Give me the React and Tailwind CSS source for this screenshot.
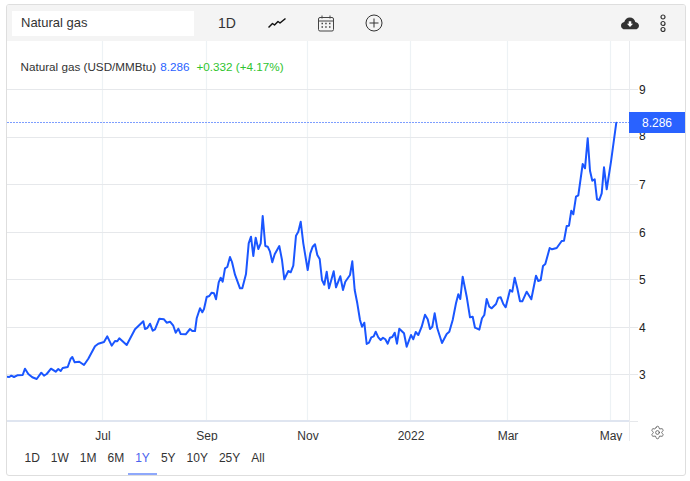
import React from "react";
import { Settings } from "lucide-react";

const seg = (ox, oy, s, pts) => pts.map(([x, y]) => [ox + x / s, oy + y / s]);
const line = [
  ...seg(0, 260, 3, [[20,350],[28,351],[34,347],[42,351],[52,346],[68,345],[75,326],[85,342],[97,352],[110,357],[124,338],[132,347],[140,342],[153,326],[167,335],[175,327],[182,333],[188,324],[203,321],[212,296],[217,291],[224,307],[238,305],[252,315],[265,296],[285,259],[295,251],[312,246],[322,229],[335,257],[345,243],[352,244],[358,235],[380,255],[405,208],[430,184],[435,207],[442,204],[450,191],[458,212],[465,208],[478,176],[492,178],[500,188],[510,185],[520,197],[527,218],[535,206],[542,222],[557,223],[570,207],[577,213],[585,213],[590,175]]),
  ...seg(200, 200, 3, [[0,325],[7,337],[12,327],[20,291],[28,288],[35,278],[42,280],[48,298],[56,247],[62,233],[68,245],[75,205],[82,201],[90,171],[96,186],[105,224],[120,265],[127,265],[138,222],[146,130],[153,110],[160,168],[167,113],[175,147],[182,130],[188,48],[196,138],[203,140],[210,155],[217,187],[224,163],[238,138],[246,180],[253,238],[265,213],[272,217],[280,197],[288,107],[295,95],[302,65],[310,130],[323,210],[331,160],[338,140],[345,133],[352,165],[359,177],[366,240],[373,254],[380,215],[387,265],[401,214],[408,262],[421,229],[429,270],[436,245],[450,225],[457,184],[464,270],[472,310],[480,360],[486,380],[493,368],[500,432],[507,428],[514,412],[521,409],[527,395],[535,412],[542,420],[549,413],[556,418],[563,431],[570,413],[577,411],[584,398],[591,431],[598,386]]),
  ...seg(400, 240, 3, [[12,280],[20,320],[33,285],[40,298],[47,276],[55,285],[65,260],[75,224],[83,238],[90,267],[97,260],[104,220],[112,265],[126,309],[140,282],[148,275],[158,240],[168,190],[175,163],[181,177],[188,110],[200,170],[210,232],[218,230],[225,263],[238,269],[246,235],[253,225],[260,177],[268,200],[275,205],[288,192],[295,173],[302,172],[310,192],[317,202],[330,150],[337,155],[344,113],[352,145],[360,184],[367,184],[380,155],[394,178],[408,107],[415,123],[422,120],[429,78],[436,72]]),
  ...seg(540, 110, 3, [[29,414],[36,418],[50,414],[65,393],[72,392],[80,348],[87,347],[94,302],[100,313],[108,260],[115,256],[128,162],[135,175],[143,85],[150,182],[157,212],[164,208],[171,268],[178,270],[185,250],[192,172],[200,238],[213,155],[229,38]]),
];
// svg origin is at page (7, 41)
const pointsAttr = line.map(([x, y]) => `${(x - 7).toFixed(1)},${(y - 41).toFixed(1)}`).join(" ");

const ys = [[9, 89], [8, 137], [7, 184], [6, 232], [5, 279], [4, 327], [3, 374]];
const xs = [["Jul", 102], ["Sep", 206], ["Nov", 307], ["2022", 410], ["Mar", 507], ["May", 610]];
const ranges = ["1D", "1W", "1M", "6M", "1Y", "5Y", "10Y", "25Y", "All"];

function Chart() {
  return (
    <svg width="678" height="400" viewBox="0 0 678 400" className="block" style={{ fontFamily: '"Liberation Sans", Arial, sans-serif' }}>
      {xs.map(([, x]) => (
        <line key={x} x1={x - 7 + 0.5} x2={x - 7 + 0.5} y1="0" y2="380" stroke="#edf2f5" strokeWidth="1.2" />
      ))}
      {ys.map(([, y]) => (
        <line key={y} x1="0" x2="631" y1={y - 41 + 0.5} y2={y - 41 + 0.5} stroke="#e6e8eb" strokeWidth="1.2" />
      ))}
      <line x1="0" x2="631" y1="380.5" y2="380.5" stroke="#e6e8eb" strokeWidth="1" />
      <line x1="0" x2="622" y1="380" y2="380" stroke="#dfe5f0" strokeWidth="2" />
      <line x1="622.5" x2="622.5" y1="0" y2="400" stroke="#e9ebee" strokeWidth="1" />
      <line x1="0" x2="622" y1="81.5" y2="81.5" stroke="#7d9eff" strokeWidth="1" strokeDasharray="2 1" />
      <polyline points={pointsAttr} fill="none" stroke="#1a56ff" strokeWidth="2" strokeLinejoin="round" strokeLinecap="round" />
      {ys.map(([v, y]) => (
        <text key={v} x="632" y={(v === 8 ? y - 2 : y) - 41 + 4.5} fontSize="12" fill="#222">{v}</text>
      ))}
      <rect x="622" y="71" width="56" height="21" fill="#2962ff" />
      <text x="650" y="86" fontSize="12" fill="#fff" textAnchor="middle">8.286</text>
      {xs.map(([t, x]) => (
        <text key={t} x={t === "May" ? 604 : x - 6} y="398.5" fontSize="12" fill="#333" textAnchor="middle">{t}</text>
      ))}
    </svg>
  );
}

export default function App() {
  return (
    <div className="h-[481px] w-[690px] bg-white pl-[6px] pt-[4px] text-[#333]" style={{ fontFamily: '"Liberation Sans", Arial, sans-serif' }}>
      <div className="relative h-[472px] w-[680px] overflow-hidden rounded-[3px] border border-[#dedede]">
        <div className="flex h-[36px] items-center bg-[#f4f4f4] pl-[5px]">
          <div className="flex h-[25px] w-[182px] items-center bg-white pl-[9px] text-[13px] text-[#333]">Natural gas</div>
          <span className="ml-[24px] text-[14px] text-[#333]">1D</span>
          <svg className="ml-[32px]" width="18" height="12" viewBox="0 0 18 12" fill="none" stroke="#111" strokeWidth="1.5" strokeLinejoin="round">
            <path d="M0.5 10.5 L4.5 6.5 L6.5 8 L10 4.5 L12 6 L17.5 1.5" />
          </svg>
          <svg className="ml-[32px]" width="17" height="17" viewBox="0 0 17 17" fill="none" stroke="#444" strokeWidth="1">
            <rect x="0.5" y="2.5" width="15" height="13.5" rx="1.5" />
            <path d="M0.5 6 H15.5" />
            <path d="M4 0.5 V3.5 M12 0.5 V3.5" />
            <path d="M3.5 8.5 H5 M7.2 8.5 H8.7 M11 8.5 H12.5 M3.5 12 H5 M7.2 12 H8.7 M11 12 H12.5" strokeWidth="1.4" />
          </svg>
          <svg className="ml-[30px]" width="18" height="18" viewBox="0 0 18 18" fill="none" stroke="#333" strokeWidth="1">
            <circle cx="9" cy="9" r="8" />
            <path d="M9 4.5 V13.5 M4.5 9 H13.5" />
          </svg>
          <svg className="ml-[238px]" width="18" height="13" viewBox="0 0 20 14">
            <path d="M4.5 13.5 C1.8 13.5 0 11.6 0 9.4 C0 7.3 1.5 5.7 3.6 5.4 C4.4 2.3 6.8 0.3 9.8 0.3 C12.9 0.3 15.3 2.4 15.9 5.2 C18.2 5.4 20 7.2 20 9.4 C20 11.7 18.1 13.5 15.7 13.5 Z" fill="#333" />
            <path d="M8.6 4.5 H11.4 V7.4 H13.4 L10 11 L6.6 7.4 H8.6 Z" fill="#fff" />
          </svg>
          <svg className="ml-[21px]" width="6" height="18" viewBox="0 0 6 18" fill="none" stroke="#333" strokeWidth="1.2">
            <circle cx="3" cy="3" r="2" />
            <circle cx="3" cy="9.5" r="2" />
            <circle cx="3" cy="15.5" r="2" />
          </svg>
        </div>

        <Chart />

        <div className="absolute left-[13.5px] top-[55px] whitespace-nowrap text-[11.7px] leading-[14px]">
          <span className="text-[#333]">Natural gas (USD/MMBtu)</span>
          <span className="ml-[4px] text-[#2962ff]">8.286</span>
          <span className="ml-[7px] text-[#2fc42f]">+0.332 (+4.17%)</span>
        </div>

        <Settings className="absolute left-[643px] top-[420px] text-[#555]" size={15} strokeWidth={1.3} />

        <div className="flex h-[34px] items-stretch pl-[12px]">
          {ranges.map((r) => (
            <div
              key={r}
              className={
                r === "1Y"
                  ? "-mx-[1.5px] flex items-center border-b-2 border-[#8ea8fb] px-[7px] pt-[2px] text-[12px] text-[#4a62ee]"
                  : "flex items-center border-b-2 border-transparent px-[5.5px] pt-[2px] text-[12px] text-[#333]"
              }
            >
              {r}
            </div>
          ))}
        </div>
      </div>
    </div>
  );
}
